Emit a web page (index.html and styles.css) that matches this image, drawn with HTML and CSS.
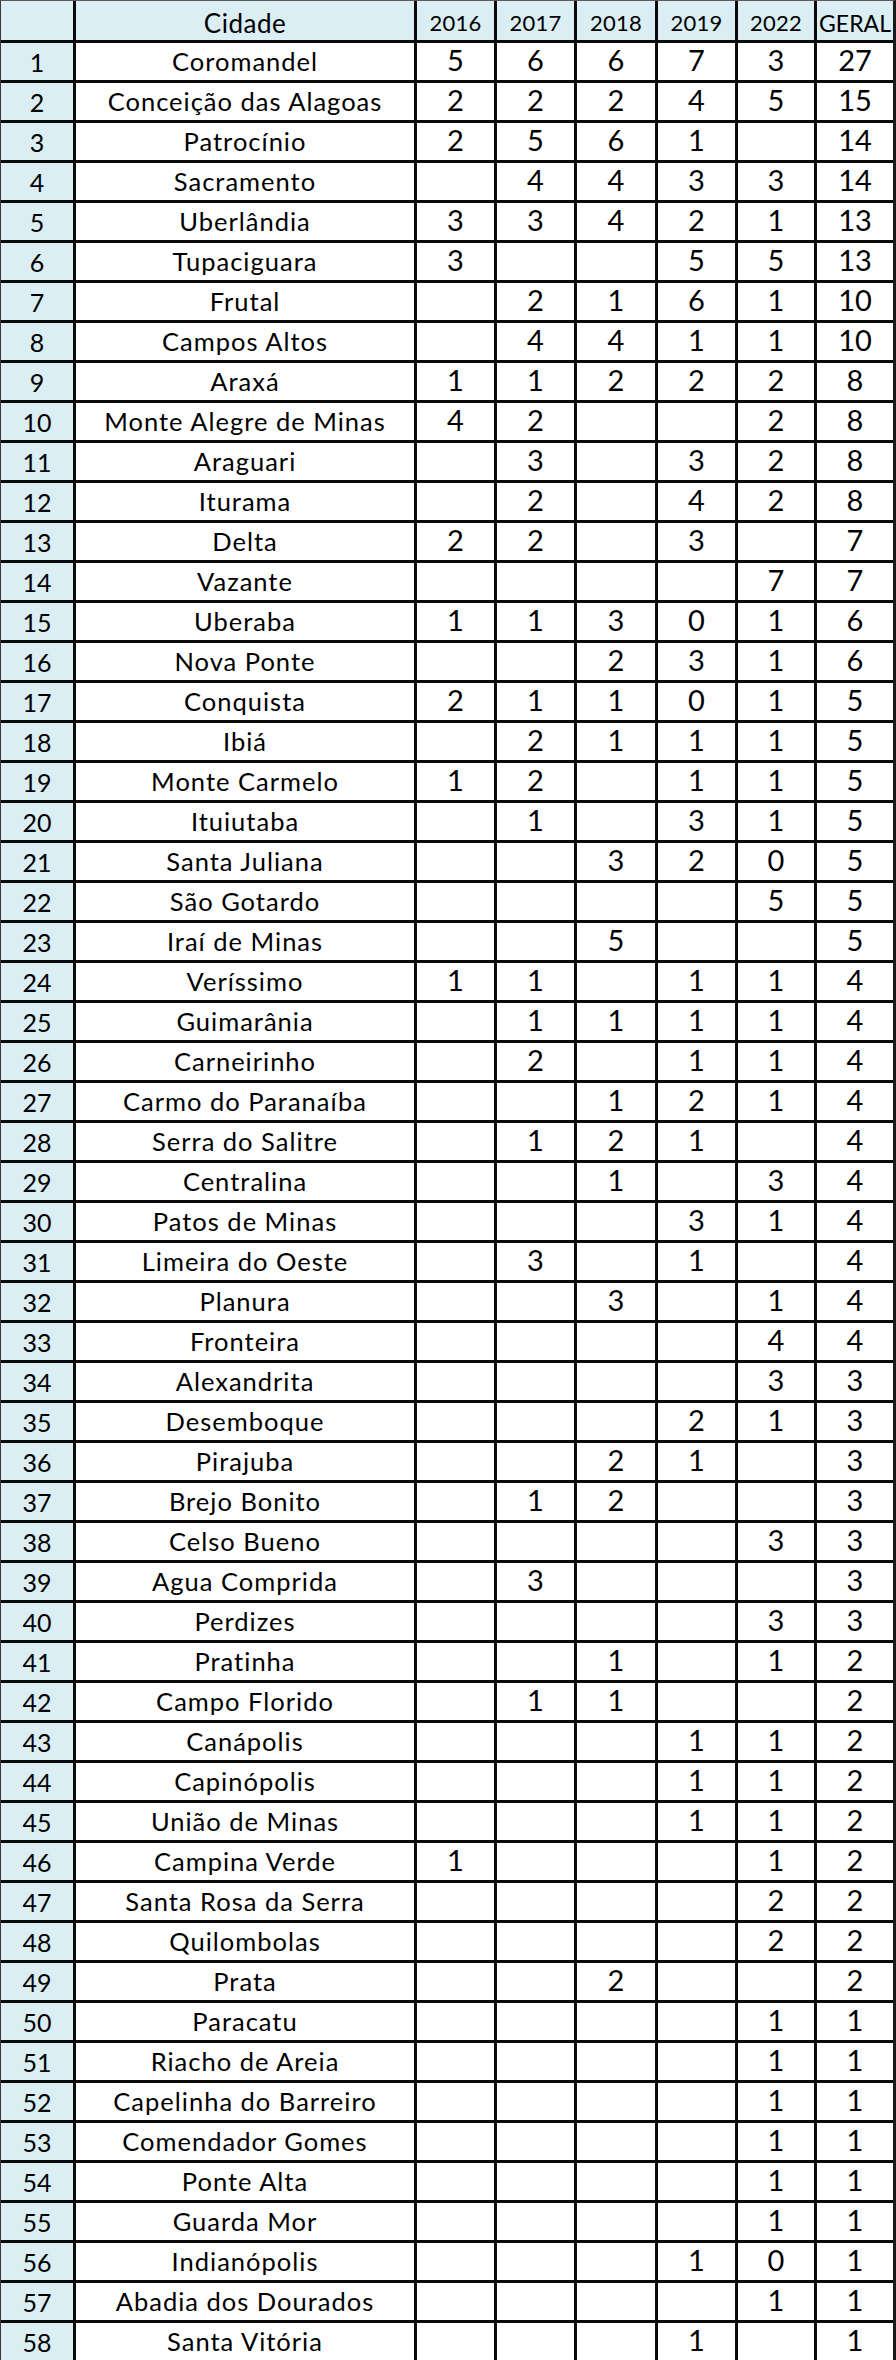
FILE: index.html
```html
<!DOCTYPE html>
<html lang="pt-BR">
<head>
<meta charset="utf-8">
<title>Ranking por cidade</title>
<link rel="stylesheet" href="styles.css">
</head>
<body>
<div class="sheet" id="sheet">
  <div class="c head idx"></div>
  <div class="c head city">Cidade</div>
  <div class="c head yr">2016</div>
  <div class="c head yr">2017</div>
  <div class="c head yr">2018</div>
  <div class="c head yr">2019</div>
  <div class="c head yr">2022</div>
  <div class="c head yr geral">GERAL</div>
</div>
<script src="app.js"></script>
</body>
</html>
```

FILE: app.js
```js
const rows = [
["Coromandel",5,6,6,7,3,27],
["Conceição das Alagoas",2,2,2,4,5,15],
["Patrocínio",2,5,6,1,"",14],
["Sacramento","",4,4,3,3,14],
["Uberlândia",3,3,4,2,1,13],
["Tupaciguara",3,"","",5,5,13],
["Frutal","",2,1,6,1,10],
["Campos Altos","",4,4,1,1,10],
["Araxá",1,1,2,2,2,8],
["Monte Alegre de Minas",4,2,"","",2,8],
["Araguari","",3,"",3,2,8],
["Iturama","",2,"",4,2,8],
["Delta",2,2,"",3,"",7],
["Vazante","","","","",7,7],
["Uberaba",1,1,3,0,1,6],
["Nova Ponte","","",2,3,1,6],
["Conquista",2,1,1,0,1,5],
["Ibiá","",2,1,1,1,5],
["Monte Carmelo",1,2,"",1,1,5],
["Ituiutaba","",1,"",3,1,5],
["Santa Juliana","","",3,2,0,5],
["São Gotardo","","","","",5,5],
["Iraí de Minas","","",5,"","",5],
["Veríssimo",1,1,"",1,1,4],
["Guimarânia","",1,1,1,1,4],
["Carneirinho","",2,"",1,1,4],
["Carmo do Paranaíba","","",1,2,1,4],
["Serra do Salitre","",1,2,1,"",4],
["Centralina","","",1,"",3,4],
["Patos de Minas","","","",3,1,4],
["Limeira do Oeste","",3,"",1,"",4],
["Planura","","",3,"",1,4],
["Fronteira","","","","",4,4],
["Alexandrita","","","","",3,3],
["Desemboque","","","",2,1,3],
["Pirajuba","","",2,1,"",3],
["Brejo Bonito","",1,2,"","",3],
["Celso Bueno","","","","",3,3],
["Agua Comprida","",3,"","","",3],
["Perdizes","","","","",3,3],
["Pratinha","","",1,"",1,2],
["Campo Florido","",1,1,"","",2],
["Canápolis","","","",1,1,2],
["Capinópolis","","","",1,1,2],
["União de Minas","","","",1,1,2],
["Campina Verde",1,"","","",1,2],
["Santa Rosa da Serra","","","","",2,2],
["Quilombolas","","","","",2,2],
["Prata","","",2,"","",2],
["Paracatu","","","","",1,1],
["Riacho de Areia","","","","",1,1],
["Capelinha do Barreiro","","","","",1,1],
["Comendador Gomes","","","","",1,1],
["Ponte Alta","","","","",1,1],
["Guarda Mor","","","","",1,1],
["Indianópolis","","","",1,0,1],
["Abadia dos Dourados","","","","",1,1],
["Santa Vitória","","","",1,"",1]
];
const sheet = document.getElementById("sheet");
const frag = document.createDocumentFragment();
function cell(cls, text) {
  const d = document.createElement("div");
  d.className = "c " + cls;
  d.textContent = text;
  frag.appendChild(d);
}
rows.forEach((r, i) => {
  cell("idx", String(i + 1));
  cell("city", r[0]);
  for (let k = 1; k <= 5; k++) cell("num", String(r[k]));
  cell("num geral", String(r[6]));
});
sheet.appendChild(frag);
```

FILE: styles.css
```css
html, body {
  margin: 0;
  padding: 0;
  background: #ffffff;
}

.sheet {
  display: grid;
  grid-template-columns: 72px 341px 80px 80px 81px 80px 79px 79px;
  grid-template-rows: 39px;
  grid-auto-rows: 40px;
  width: 896px;
  box-sizing: border-box;
  border-top: 1px solid #5a5a5a;
  border-left: 1px solid #3a3a3a;
  border-right: 3px solid #1a1a1a;
  font-family: "Lato", "Open Sans", sans-serif;
  color: #000000;
}

.c {
  box-sizing: border-box;
  display: flex;
  align-items: center;
  justify-content: center;
  border-top: 3px solid #0a0a0a;
  border-left: 3px solid #0a0a0a;
  white-space: nowrap;
  overflow: hidden;
  line-height: 1.2;
}

.c.idx {
  border-left: none;
  background: #daeef3;
  font-size: 25px;
}

.c.head {
  border-top: none;
  background: #daeef3;
  padding-top: 6px;
}

.c.city {
  font-size: 25.5px;
  letter-spacing: 1px;
}

.c.num {
  font-size: 29px;
  padding-bottom: 2px;
}

.c.head.yr {
  font-size: 22px;
  letter-spacing: 0.3px;
}

.c.head.geral {
  font-size: 23px;
  letter-spacing: 0;
}

.c.head.city {
  font-size: 26px;
  letter-spacing: 0.5px;
}
```
